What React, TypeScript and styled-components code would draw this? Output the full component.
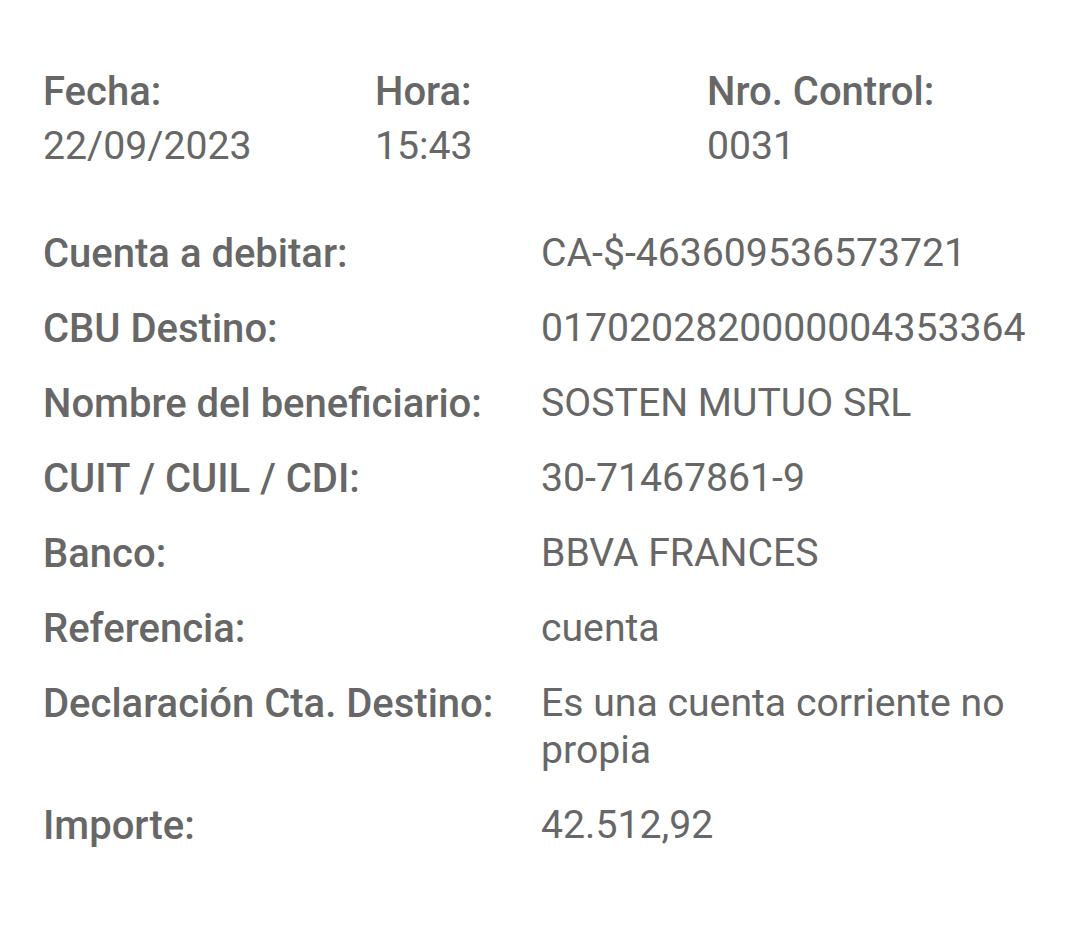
import React from 'react';
import styled, { createGlobalStyle } from 'styled-components';

const GlobalStyle = createGlobalStyle`
	html, body {
		margin: 0;
		padding: 0;
		background: #ffffff;
	}
	body {
		font-family: Roboto, 'Liberation Sans', sans-serif;
	}
`;

const HEADER = [
	{ key: 'fecha', label: 'Fecha:', value: '22/09/2023' },
	{ key: 'hora', label: 'Hora:', value: '15:43' },
	{ key: 'control', label: 'Nro. Control:', value: '0031' },
];

const DETAILS = [
	{ key: 'cuenta', label: 'Cuenta a debitar:', value: 'CA-$-463609536573721' },
	{ key: 'cbu', label: 'CBU Destino:', value: '0170202820000004353364' },
	{ key: 'nombre', label: 'Nombre del beneficiario:', value: 'SOSTEN MUTUO SRL' },
	{ key: 'cuit', label: 'CUIT / CUIL / CDI:', value: '30-71467861-9' },
	{ key: 'banco', label: 'Banco:', value: 'BBVA FRANCES' },
	{ key: 'referencia', label: 'Referencia:', value: 'cuenta' },
	{ key: 'declaracion', label: 'Declaración Cta. Destino:', value: 'Es una cuenta corriente no propia' },
	{ key: 'importe', label: 'Importe:', value: '42.512,92' },
];

const App = () => {
	return (
		<>
			<GlobalStyle />
			<Receipt>
				<HeaderRow>
					{HEADER.map(({ key, label, value }) => (
						<HeaderCell key={key}>
							<Label>{label}</Label>
							<Value>{value}</Value>
						</HeaderCell>
					))}
				</HeaderRow>
				<DetailList>
					{DETAILS.map(({ key, label, value }) => (
						<DetailRow key={key}>
							<Label>{label}</Label>
							<Value>{value}</Value>
						</DetailRow>
					))}
				</DetailList>
			</Receipt>
		</>
	);
};

const Receipt = styled.div`
	width: 1080px;
	height: 929px;
	box-sizing: border-box;
	padding: 68px 40px 0 43px;
	color: #676767;
`;

const HeaderRow = styled.div`
	display: grid;
	grid-template-columns: 332px 332px 1fr;
`;

const HeaderCell = styled.div`
	display: flex;
	flex-direction: column;
	gap: 8px;
`;

const Label = styled.div`
	font-size: 40px;
	line-height: 47px;
	font-weight: 500;
`;

const Value = styled.div`
	font-size: 39.2px;
	line-height: 47px;
	font-weight: 400;
`;

const DetailList = styled.div`
	display: flex;
	flex-direction: column;
	gap: 28px;
	margin-top: 60px;
`;

const DetailRow = styled.div`
	display: grid;
	grid-template-columns: 498px 1fr;
`;

export default App;
